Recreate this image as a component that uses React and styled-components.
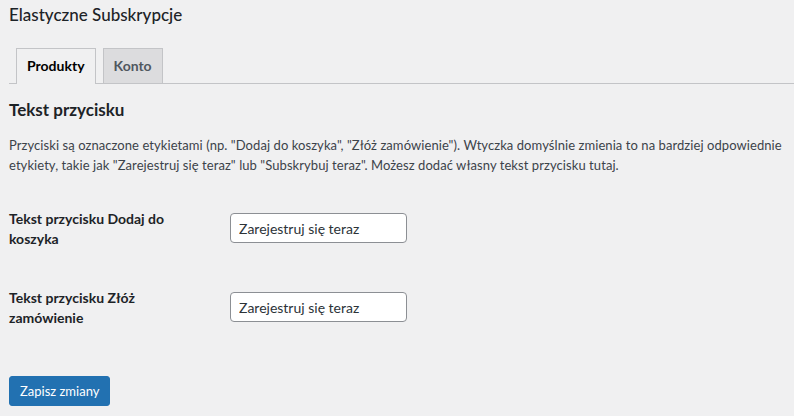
import React from 'react';
import styled, { createGlobalStyle } from 'styled-components';

const GlobalStyle = createGlobalStyle`
  body {
    margin: 0;
    background: #f0f0f1;
    font-family: Lato, "Liberation Sans", sans-serif;
    color: #1d2327;
  }
`;

const Wrap = styled.div`
  padding: 3px 0 0 9px;
`;

const Title = styled.h1`
  margin: 0;
  font-size: 17px;
  font-weight: 500;
  line-height: 23px;
  color: #1d2327;
`;

const TabNav = styled.nav`
  display: flex;
  align-items: flex-end;
  margin-top: 22px;
  border-bottom: 1px solid #c3c4c7;
`;

const Tab = styled.a`
  box-sizing: border-box;
  display: block;
  height: ${p => (p.active ? '36px' : '35px')};
  margin: 0 0 ${p => (p.active ? '-1px' : '0')} 7px;
  padding: 0 10px;
  border: 1px solid #c3c4c7;
  border-bottom: none;
  background: ${p => (p.active ? '#f0f0f1' : '#dcdcde')};
  color: ${p => (p.active ? '#000' : '#50575e')};
  font-size: 14px;
  font-weight: 700;
  line-height: 34px;
  text-decoration: none;
  cursor: pointer;
`;

const Heading = styled.h2`
  margin: 15px 0 0;
  font-size: 17px;
  font-weight: 700;
  line-height: 22px;
  color: #1d2327;
`;

const Intro = styled.p`
  margin: 15px 0 0;
  font-size: 13px;
  line-height: 19.5px;
  letter-spacing: 0.07px;
  color: #3c434a;
`;

const Form = styled.form`
  margin-top: 23px;
`;

const Row = styled.div`
  display: grid;
  grid-template-columns: 200px 177px;
  column-gap: 21px;
  align-items: start;
  height: 79px;
`;

const Label = styled.label`
  padding-top: 11px;
  font-size: 14px;
  font-weight: 700;
  line-height: 20px;
  color: #1d2327;
`;

const TextInput = styled.input`
  box-sizing: border-box;
  width: 177px;
  height: 30px;
  margin-top: 15px;
  padding: 0 8px;
  border: 1px solid #8c8f94;
  border-radius: 4px;
  background: #fff;
  color: #2c3338;
  font-family: inherit;
  font-size: 14px;
  outline: none;
`;

const SubmitButton = styled.button`
  box-sizing: border-box;
  display: block;
  height: 30px;
  margin-top: 20px;
  padding: 0 10px;
  border: 1px solid #2271b1;
  border-radius: 3px;
  background: #2271b1;
  color: #fff;
  font-family: inherit;
  font-size: 13px;
  line-height: 28px;
  cursor: pointer;
`;

const fields = [
  { id: 'add_to_cart', label: 'Tekst przycisku Dodaj do koszyka' },
  { id: 'place_order', label: 'Tekst przycisku Złóż zamówienie' },
];

export default function App() {
  return (
    <>
      <GlobalStyle />
      <Wrap>
        <Title>Elastyczne Subskrypcje</Title>
        <TabNav>
          <Tab active>Produkty</Tab>
          <Tab>Konto</Tab>
        </TabNav>
        <Heading>Tekst przycisku</Heading>
        <Intro>
          Przyciski są oznaczone etykietami (np. "Dodaj do koszyka", "Złóż zamówienie"). Wtyczka domyślnie
          zmienia to na bardziej odpowiednie etykiety, takie jak "Zarejestruj się teraz" lub "Subskrybuj
          teraz". Możesz dodać własny tekst przycisku tutaj.
        </Intro>
        <Form onSubmit={e => e.preventDefault()}>
          {fields.map(f => (
            <Row key={f.id}>
              <Label htmlFor={f.id}>{f.label}</Label>
              <TextInput id={f.id} type="text" defaultValue="Zarejestruj się teraz" />
            </Row>
          ))}
          <SubmitButton type="submit">Zapisz zmiany</SubmitButton>
        </Form>
      </Wrap>
    </>
  );
}
